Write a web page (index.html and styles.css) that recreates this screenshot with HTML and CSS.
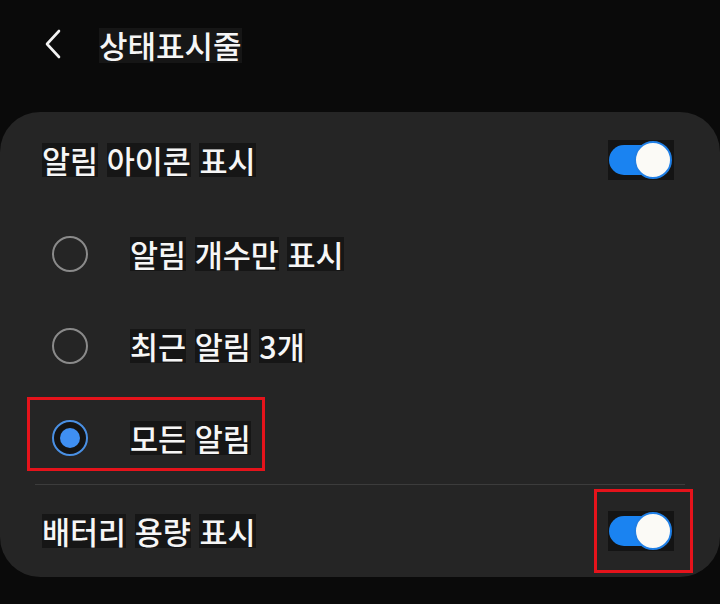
FILE: index.html
```html
<!DOCTYPE html>
<html lang="ko">
<head>
<meta charset="utf-8">
<link rel="stylesheet" href="styles.css">
</head>
<body>
<div class="screen">
  <header class="topbar">
    <svg class="back" width="20" height="30" viewBox="0 0 20 30"><path d="M15 2 L3 15 L15 28" fill="none" stroke="#f2f2f2" stroke-width="2.6" stroke-linecap="round" stroke-linejoin="round"/></svg>
    <h1 class="title"><span class="w">상태표시줄</span></h1>
  </header>
  <section class="card">
    <div class="row row-first">
      <div class="label"><span class="w">알림</span> <span class="w">아이콘</span> <span class="w">표시</span></div>
      <div class="switch"><div class="track"></div><div class="knob"></div></div>
    </div>
    <div class="row radio-row">
      <span class="radio"></span>
      <div class="label"><span class="w">알림</span> <span class="w">개수만</span> <span class="w">표시</span></div>
    </div>
    <div class="row radio-row">
      <span class="radio"></span>
      <div class="label"><span class="w">최근</span> <span class="w">알림</span> <span class="w">3개</span></div>
    </div>
    <div class="row radio-row">
      <span class="radio checked"></span>
      <div class="label"><span class="w">모든</span> <span class="w">알림</span></div>
      <div class="mark mark-a"></div>
    </div>
    <div class="divider"></div>
    <div class="row row-last">
      <div class="label"><span class="w">배터리</span> <span class="w">용량</span> <span class="w">표시</span></div>
      <div class="switch"><div class="track"></div><div class="knob"></div></div>
      <div class="mark mark-b"></div>
    </div>
  </section>
</div>
</body>
</html>
```
FILE: styles.css
```css
html, body {
  margin: 0;
  padding: 0;
  background: #0a0a0a;
}
body {
  width: 720px;
  height: 604px;
  overflow: hidden;
  font-family: "Noto Sans CJK KR", "Noto Sans", sans-serif;
  color: #f6f6f6;
}
.screen {
  display: flex;
  flex-direction: column;
}
.topbar {
  height: 112px;
  display: flex;
  align-items: flex-start;
  padding-top: 28px;
  box-sizing: border-box;
}
.back {
  margin-left: 44px;
  margin-top: 1px;
}
.title {
  margin: 0 0 0 35px;
  font-size: 31px;
  font-weight: 500;
  line-height: 32px;
}
.w {
  display: inline-block;
  line-height: 1.12;
  background: #161616;
}
.card {
  position: relative;
  background: #252525;
  border-radius: 40px;
  height: 465px;
  display: flex;
  flex-direction: column;
}
.row {
  position: relative;
  display: flex;
  align-items: center;
  height: 92px;
  padding: 0 46px 0 42px;
  box-sizing: border-box;
}
.row-first {
  height: 96px;
}
.label {
  flex: 1;
  font-size: 30.5px;
  font-weight: 500;
  line-height: 34px;
  white-space: nowrap;
}
.radio-row {
  padding-left: 52px;
}
.radio {
  width: 36px;
  height: 36px;
  box-sizing: border-box;
  border: 2px solid #8a8a8a;
  border-radius: 50%;
  margin-right: 42px;
  display: flex;
  align-items: center;
  justify-content: center;
  flex: none;
}
.radio.checked {
  border-color: #4a90e4;
  background: #141414;
}
.radio.checked::after {
  content: "";
  width: 20px;
  height: 20px;
  border-radius: 50%;
  background: #3f8ff2;
}
.switch {
  position: relative;
  width: 66px;
  height: 40px;
  flex: none;
  background: #141414;
}
.track {
  position: absolute;
  left: 1px;
  top: 5px;
  width: 58px;
  height: 30px;
  border-radius: 15px;
  background: #1a83f1;
}
.knob {
  position: absolute;
  left: 26px;
  top: 1px;
  width: 38px;
  height: 38px;
  box-sizing: border-box;
  border-radius: 50%;
  background: #fbfaf6;
  border: 2px solid #1f7fe6;
}
.divider {
  height: 1px;
  margin: 0 35px;
  background: #3c3c3c;
}
.mark {
  position: absolute;
  border: 3px solid #e5131b;
  box-sizing: border-box;
}
.mark-a {
  left: 27px;
  top: 5px;
  width: 238px;
  height: 74px;
}
.mark-b {
  left: 594px;
  top: 4px;
  width: 99px;
  height: 84px;
}
```
